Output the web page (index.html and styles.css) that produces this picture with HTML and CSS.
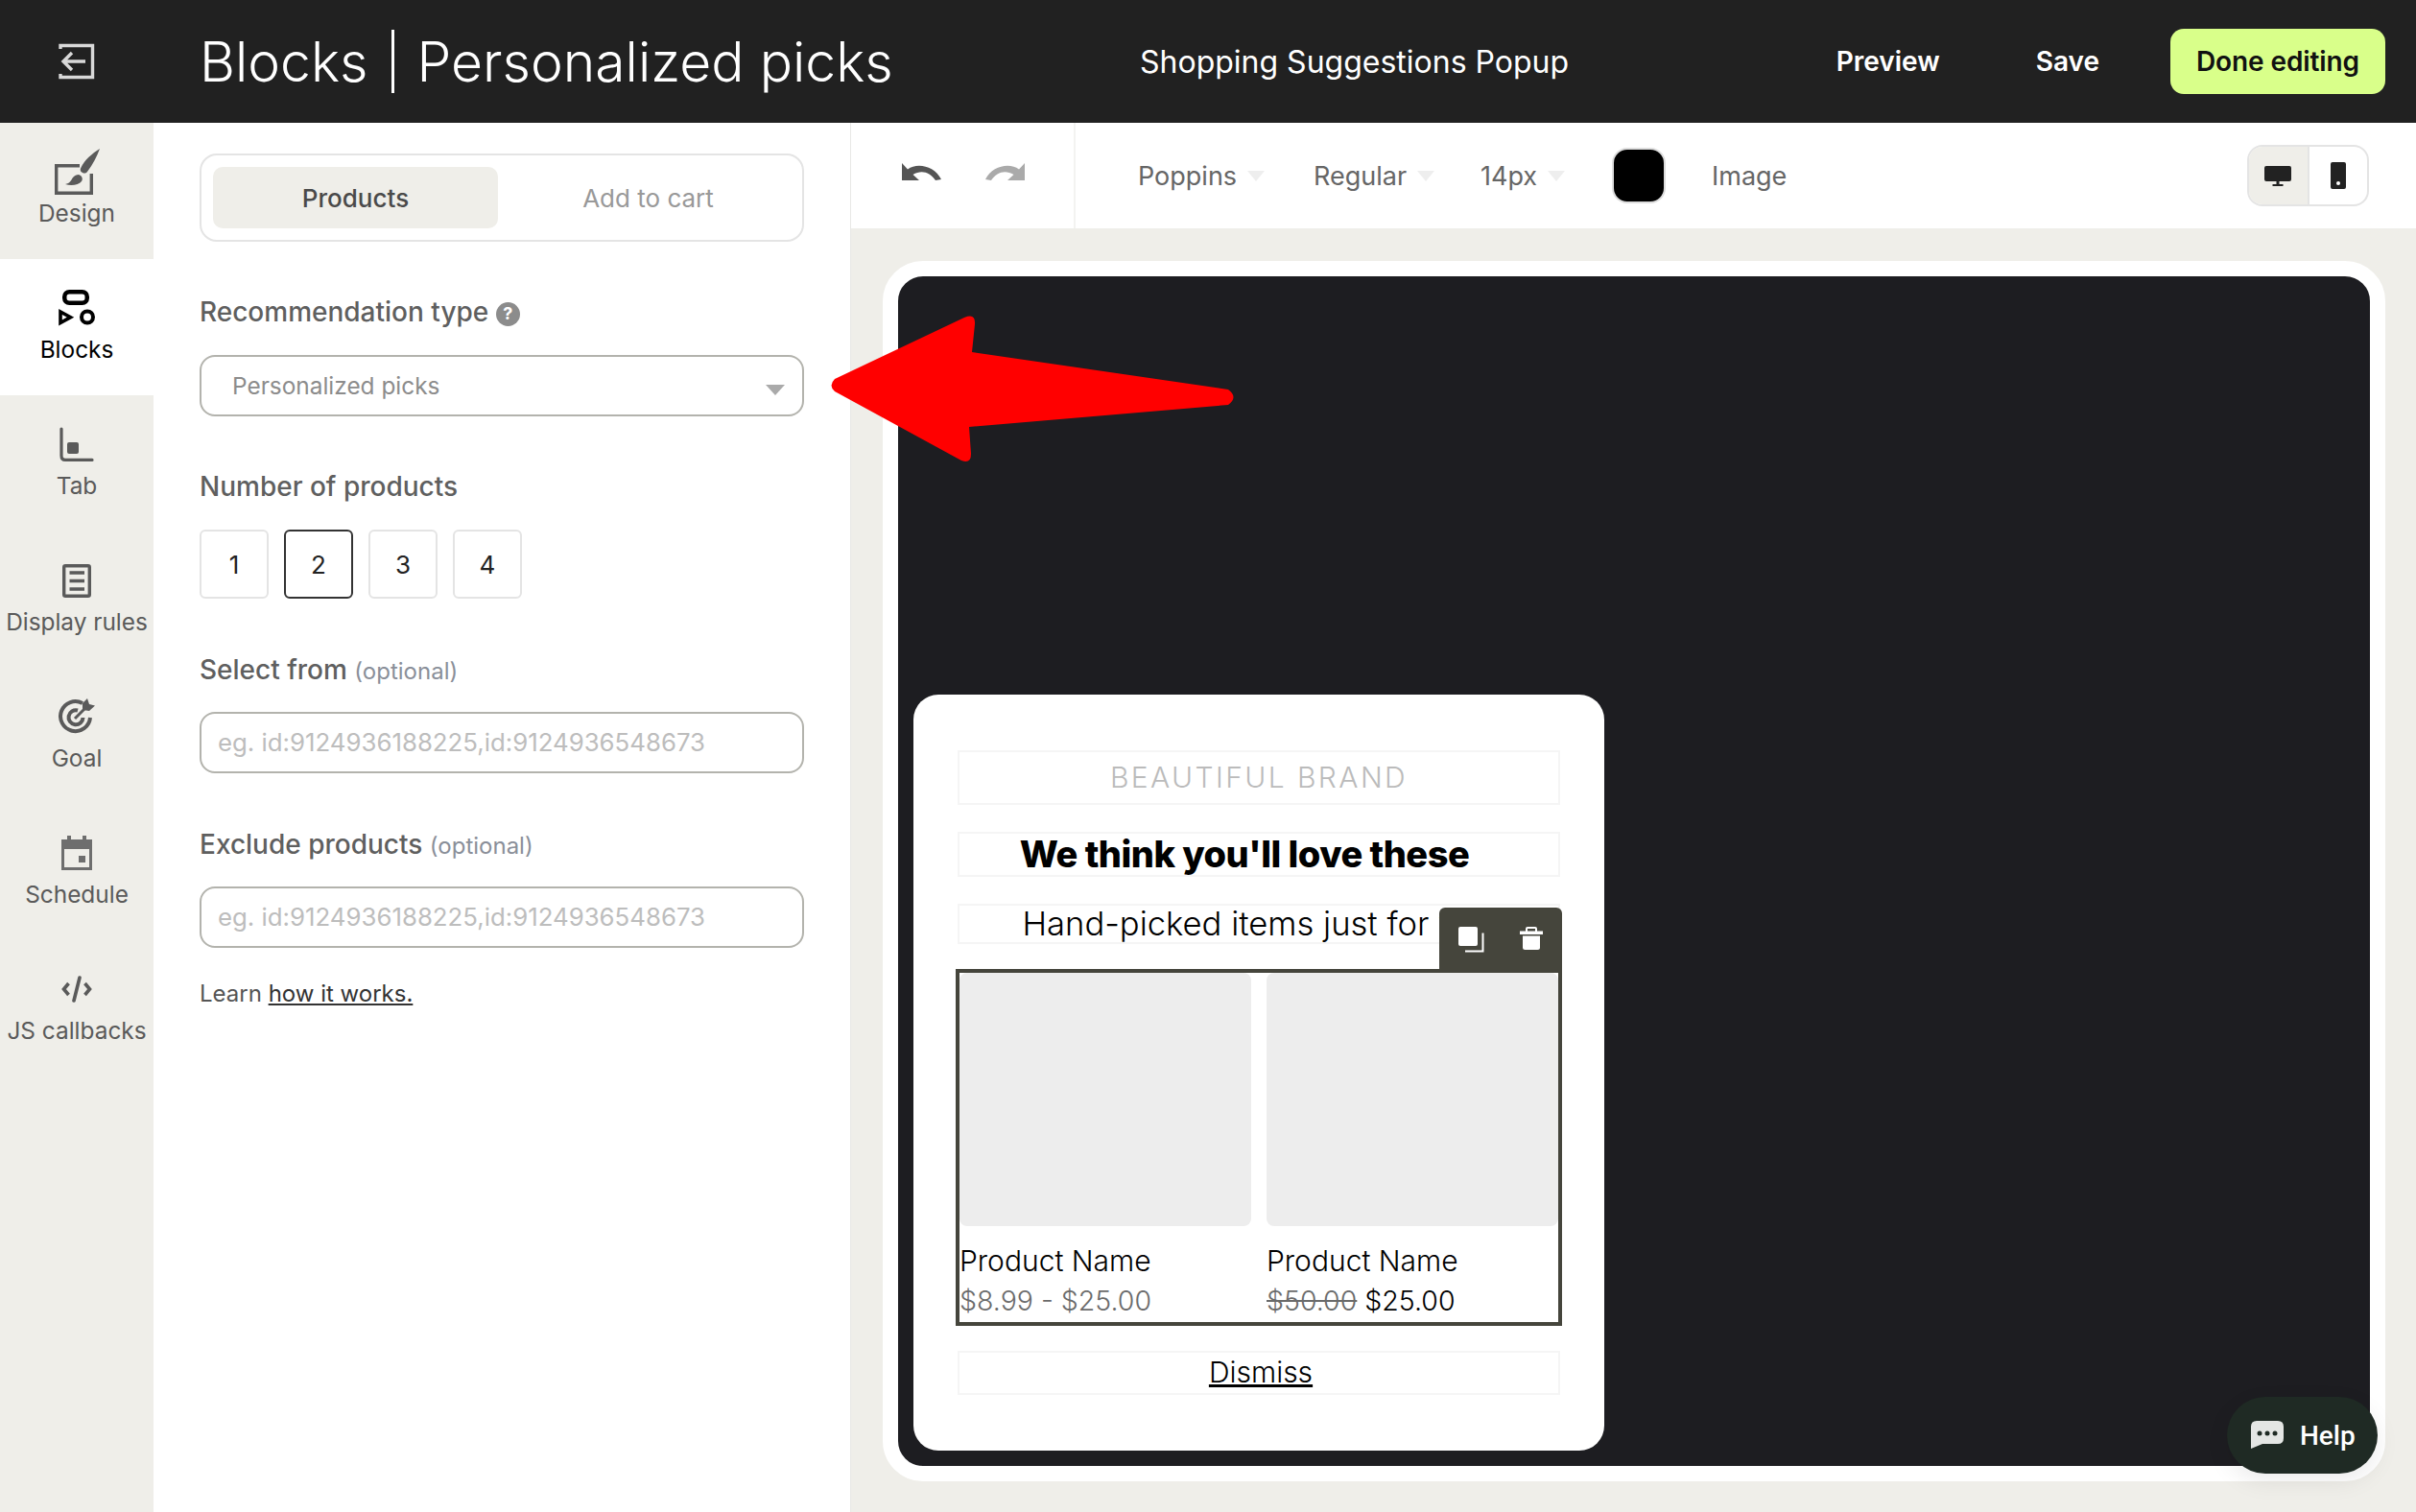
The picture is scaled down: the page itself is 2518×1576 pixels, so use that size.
FILE: index.html
```html
<!DOCTYPE html>
<html lang="en">
<head>
  <meta charset="UTF-8" />
  <title>Personalized picks</title>
  <link rel="stylesheet" href="styles.css">
</head>
<body>
  <header class="topbar">
    <div class="back-btn">
      <svg width="38" height="38" viewBox="0 0 38 38" fill="none" stroke="#d8d8d8" stroke-width="3.4">
        <path d="M2 6V2.500H35.500V35.500H2V32" />
        <path d="M28 19H6M14 10L5 19L14 28" />
      </svg>
    </div>
    <h1 class="page-title">Blocks <span class="title-sep"></span> Personalized picks</h1>
    <div class="campaign-name">Shopping Suggestions Popup</div>
    <nav class="top-actions">
      <a class="top-link preview-link">Preview</a>
      <a class="top-link save-link">Save</a>
      <button class="done-btn">Done editing</button>
    </nav>
  </header>

  <div class="workspace">
    <aside class="sidebar">
      <div class="side-item">
        <div class="side-icon">
          <svg width="47" height="48" viewBox="0 0 47 48" fill="#5a5a5a">
            <path d="M26 17.700H1.700V46.300H38.300V26" fill="none" stroke="#5a5a5a" stroke-width="3.400" />
            <path d="M47 0C44 8 40 16 34 24C32 26.500 29 25.500 27.500 24C26.500 22.500 26.500 21 27.500 19.500C31 12 39 5 47 0Z" />
            <path d="M25 27C28 28 30 31 28 34C25 38 17 39 11 37C16 36 17 33 19 30C20.500 28 23 27 25 27Z" />
          </svg>
        </div>
        <span>Design</span>
      </div>
      <div class="side-item is-active">
        <div class="side-icon">
          <svg width="38" height="38" viewBox="0 0 38 38" fill="none" stroke="#000" stroke-width="4.500">
            <rect x="6.250" y="2.250" width="23.500" height="11.500" rx="5" />
            <path d="M2 23V34.500L12.500 28.700Z" stroke-width="3.600" />
            <circle cx="30" cy="28.500" r="6" stroke-width="4" />
          </svg>
        </div>
        <span>Blocks</span>
      </div>
      <div class="side-item">
        <div class="side-icon">
          <svg width="36" height="36" viewBox="0 0 36 36" fill="none" stroke="#5a5a5a" stroke-width="3.200" stroke-linecap="round">
            <path d="M2 2V30Q2 34.400 6 34.400H34" />
            <rect x="8" y="16" width="12" height="12" rx="2" fill="#5a5a5a" stroke="none" />
          </svg>
        </div>
        <span>Tab</span>
      </div>
      <div class="side-item">
        <div class="side-icon">
          <svg width="30" height="35" viewBox="0 0 30 35" fill="none" stroke="#5a5a5a" stroke-width="3.400">
            <rect x="1.700" y="1.700" width="26.600" height="31.600" rx="1.500" />
            <path d="M7.500 9H23M7.500 17.500H23M7.500 26H23" />
          </svg>
        </div>
        <span>Display rules</span>
      </div>
      <div class="side-item">
        <div class="side-icon">
          <svg width="38" height="38" viewBox="0 0 38 38" fill="none" stroke="#5a5a5a" stroke-width="4">
            <path d="M25 5A15.500 15.500 0 1 0 33 20" />
            <path d="M20 12.500A7.500 7.500 0 1 0 25.500 20" />
            <path d="M17 21L27 11" stroke-width="3" />
            <path d="M25 5L30 0L32 6L38 7.500L32 13L25 12Z" fill="#5a5a5a" stroke="none" />
          </svg>
        </div>
        <span>Goal</span>
      </div>
      <div class="side-item">
        <div class="side-icon">
          <svg width="32" height="36" viewBox="0 0 32 36" fill="#6e6e6e">
            <path d="M0 4H6V0H10V4H22V0H26V4H32V36H0ZM3 14V33H29V14Z" />
            <rect x="18" y="21" width="7" height="7" />
          </svg>
        </div>
        <span>Schedule</span>
      </div>
      <div class="side-item">
        <div class="side-icon">
          <svg width="32" height="28" viewBox="0 0 32 28" fill="none" stroke="#5a5a5a" stroke-width="3.600">
            <path d="M7.500 8L2.500 14L7.500 20M24.500 8L29.500 14L24.500 20" />
            <path d="M19 2L13 26" stroke-linecap="round" />
          </svg>
        </div>
        <span>JS callbacks</span>
      </div>
    </aside>

    <section class="settings">
      <div class="tabs">
        <div class="tab is-on">Products</div>
        <div class="tab">Add to cart</div>
      </div>

      <div class="field field-type">
        <label>Recommendation type <span class="help-dot">?</span></label>
        <div class="select-box">Personalized picks<i class="caret"></i></div>
      </div>

      <div class="field field-count">
        <label>Number of products</label>
        <div class="count-row">
          <div class="count-btn">1</div>
          <div class="count-btn is-on">2</div>
          <div class="count-btn">3</div>
          <div class="count-btn">4</div>
        </div>
      </div>

      <div class="field field-select">
        <label>Select from <small>(optional)</small></label>
        <div class="text-box">eg. id:9124936188225,id:9124936548673</div>
      </div>

      <div class="field field-exclude">
        <label>Exclude products <small>(optional)</small></label>
        <div class="text-box">eg. id:9124936188225,id:9124936548673</div>
      </div>

      <p class="learn">Learn <a>how it works.</a></p>
    </section>

    <main class="editor">
      <div class="toolbar">
        <div class="history">
          <svg width="41" height="18" viewBox="0 0 41 18" fill="#555">
            <path d="M0 0V18H18L11.500 12C20 7 29 9 35 18L41 17C34 3 16 -1 6 6.500Z" />
          </svg>
          <svg width="41" height="18" viewBox="0 0 41 18" fill="#aaa">
            <path d="M41 0V18H23L29.500 12C21 7 12 9 6 18L0 17C7 3 25 -1 35 6.500Z" />
          </svg>
        </div>
        <div class="format">
          <span class="fmt fmt-font">Poppins<i></i></span>
          <span class="fmt fmt-weight">Regular<i></i></span>
          <span class="fmt fmt-size">14px<i></i></span>
          <span class="swatch"></span>
          <span class="fmt fmt-image">Image</span>
        </div>
        <div class="device">
          <div class="device-btn is-on">
            <svg width="28" height="21" viewBox="0 0 28 21" fill="#222">
              <rect width="28" height="16" rx="2" />
              <rect x="12.500" y="16" width="3" height="3" />
              <rect x="8.500" y="19" width="11" height="2" />
            </svg>
          </div>
          <div class="device-btn">
            <svg width="16" height="28" viewBox="0 0 16 28">
              <rect width="16" height="28" rx="2" fill="#222" />
              <circle cx="8" cy="22" r="2" fill="#fff" />
            </svg>
          </div>
        </div>
      </div>

      <div class="stage">
        <div class="frame">
          <div class="popup">
            <div class="block brand">BEAUTIFUL BRAND</div>
            <div class="block headline">We think you'll love these</div>
            <div class="block subline">Hand-picked items just for you</div>
            <div class="products">
              <div class="block-tools">
                <svg width="27" height="27" viewBox="0 0 27 27" fill="none">
                  <rect width="20" height="20" rx="2" fill="#fff" />
                  <path d="M25.500 6.500V25.500H7" stroke="#fff" stroke-width="2" />
                </svg>
                <svg width="24" height="24" viewBox="0 0 24 24" fill="#fff">
                  <path d="M0 4.500H6V2Q6 0 8 0H16Q18 0 18 2V4.500H24V8H0ZM8 4.500H16V2H8Z" fill-rule="evenodd" />
                  <path d="M3 9.500H21V21.500Q21 24 18.500 24H5.500Q3 24 3 21.500Z" />
                </svg>
              </div>
              <div class="product">
                <div class="thumb"></div>
                <div class="p-name">Product Name</div>
                <div class="p-price"><span class="muted">$8.99 - $25.00</span></div>
              </div>
              <div class="product">
                <div class="thumb"></div>
                <div class="p-name">Product Name</div>
                <div class="p-price"><s class="muted">$50.00</s> $25.00</div>
              </div>
            </div>
            <div class="block dismiss"><u>Dismiss</u></div>
          </div>
        </div>
      </div>
    </main>
  </div>

  <svg class="arrow" width="440" height="170" viewBox="0 0 440 170">
    <path d="M10 75L145 11Q157 6 156 18L153 47L420 86Q431 94 420 102L150 125L152 153Q152 164 142 160L10 88Q3 82 10 75Z" fill="#ff0000" />
  </svg>

  <button class="help-btn">
    <svg width="36" height="30" viewBox="0 0 36 30">
      <path d="M7 0H29Q35 0 35 6V18Q35 24 29 24H13L1 29V6Q1 0 7 0Z" fill="#e4e6e4" />
      <circle cx="10" cy="13" r="2.500" fill="#1f2a24" />
      <circle cx="18" cy="13" r="2.500" fill="#1f2a24" />
      <circle cx="26" cy="13" r="2.500" fill="#1f2a24" />
    </svg>
    Help
  </button>
</body>
</html>
```

FILE: styles.css
```css
html, body {
  margin: 0;
  padding: 0;
  height: 100%;
  overflow: hidden;
  background: #efeee9;
  font-family: 'Inter', sans-serif;
  color: #555;
}

body {
  display: flex;
  flex-direction: column;
  position: relative;
}

/* top bar */
.topbar {
  height: 128px;
  flex: none;
  background: #212121;
  color: #fff;
  display: flex;
  align-items: center;
}

.back-btn {
  width: 160px;
  display: flex;
  justify-content: center;
}

.page-title {
  margin: 0 0 0 48px;
  width: 980px;
  font-size: 57px;
  font-weight: 300;
  white-space: nowrap;
  display: flex;
  align-items: center;
  gap: 24px;
}

.title-sep {
  width: 3px;
  height: 66px;
  background: #fff;
}

.campaign-name {
  font-size: 32px;
  font-weight: 400;
  white-space: nowrap;
}

.top-actions {
  margin-left: auto;
  display: flex;
  align-items: center;
  padding-right: 32px;
}

.top-link {
  font-size: 28px;
  font-weight: 600;
}

.preview-link {
  margin-right: 100px;
}

.save-link {
  margin-right: 74px;
}

.done-btn {
  width: 224px;
  height: 68px;
  border: none;
  border-radius: 14px;
  background: #d9ff8a;
  color: #111;
  font-family: inherit;
  font-size: 28px;
  font-weight: 600;
  letter-spacing: -0.1px;
  padding: 0;
}

.workspace {
  flex: 1;
  display: flex;
  min-height: 0;
}

/* left rail */
.sidebar {
  width: 160px;
  flex: none;
  background: #efeee9;
  display: flex;
  flex-direction: column;
}

.side-item {
  height: 142px;
  flex: none;
  display: flex;
  flex-direction: column;
  align-items: center;
  font-size: 24.4px;
  color: #5a5a5a;
  white-space: nowrap;
}

.side-icon {
  height: 48px;
  margin-top: 27px;
  margin-bottom: 4px;
  display: flex;
  align-items: center;
  justify-content: center;
}

.side-item.is-active {
  background: #fff;
  color: #000;
}

/* settings panel */
.settings {
  width: 727px;
  flex: none;
  box-sizing: border-box;
  background: #fff;
  border-right: 1px solid #e8e8e6;
  padding: 32px 48px;
}

.tabs {
  width: 630px;
  height: 92px;
  box-sizing: border-box;
  border: 2px solid #e4e4e4;
  border-radius: 18px;
  padding: 12px;
  display: flex;
}

.tab {
  flex: 1;
  display: flex;
  align-items: center;
  justify-content: center;
  border-radius: 10px;
  font-size: 26px;
  color: #999;
}

.tab.is-on {
  flex: none;
  width: 297px;
  background: #efeee9;
  color: #4a4a4a;
  font-weight: 500;
  margin-right: 8px;
}

.field label {
  display: block;
  font-size: 28px;
  font-weight: 500;
  line-height: 40px;
  color: #5f5f5f;
  white-space: nowrap;
}

.field small {
  font-size: 24px;
  font-weight: 400;
  color: #8a8f99;
}

.help-dot {
  display: inline-flex;
  width: 25px;
  height: 25px;
  align-items: center;
  justify-content: center;
  border-radius: 50%;
  background: #8c8c8c;
  color: #fff;
  font-size: 18px;
  font-weight: 700;
  vertical-align: 2px;
}

.field-type {
  margin-top: 53px;
}

.field-count {
  margin-top: 53px;
}

.field-select {
  margin-top: 54px;
}

.field-exclude {
  margin-top: 54px;
}

.select-box, .text-box {
  width: 630px;
  height: 64px;
  box-sizing: border-box;
  border: 2px solid #b3b3ad;
  border-radius: 16px;
  display: flex;
  align-items: center;
  white-space: nowrap;
}

.select-box {
  margin-top: 25px;
  padding-left: 32px;
  font-size: 24.4px;
  color: #8c8c8c;
  position: relative;
}

.caret {
  position: absolute;
  right: 18px;
  top: 29px;
  border-left: 10px solid transparent;
  border-right: 10px solid transparent;
  border-top: 11px solid #aaa;
}

.text-box {
  margin-top: 22px;
  padding-left: 17px;
  padding-bottom: 1px;
  font-size: 25.8px;
  color: #bdbdbd;
}

.count-row {
  display: flex;
  gap: 16px;
  margin-top: 25px;
}

.count-btn {
  width: 72px;
  height: 72px;
  box-sizing: border-box;
  border: 2px solid #e4e4e4;
  border-radius: 6px;
  display: flex;
  align-items: center;
  justify-content: center;
  font-size: 26px;
  color: #222;
}

.count-btn.is-on {
  border-color: #333;
}

.learn {
  margin: 32px 0 0;
  font-size: 24px;
  line-height: 32px;
  color: #555;
}

.learn a {
  color: #333;
  text-decoration: underline;
}

/* editor area */
.editor {
  flex: 1;
  min-width: 0;
  display: flex;
  flex-direction: column;
}

.toolbar {
  height: 110px;
  flex: none;
  background: #fff;
  display: flex;
  align-items: center;
}

.history {
  width: 234px;
  height: 100%;
  box-sizing: border-box;
  border-right: 2px solid #f3f3f1;
  display: flex;
  gap: 46px;
  padding: 42px 0 0 53px;
}

.format {
  display: flex;
  align-items: center;
  margin-left: 65px;
  font-size: 27px;
  color: #666;
}

.fmt {
  display: flex;
  align-items: center;
  white-space: nowrap;
}

.fmt i {
  margin-left: 11px;
  border-left: 9px solid transparent;
  border-right: 9px solid transparent;
  border-top: 11px solid #eee;
}

.fmt-font {
  width: 183px;
}

.fmt-weight {
  width: 174px;
}

.fmt-size {
  width: 137px;
}

.swatch {
  width: 56px;
  height: 58px;
  box-sizing: border-box;
  background: #000;
  border: 2px solid #ddd;
  border-radius: 16px;
  margin-right: 48px;
}

.device {
  margin-left: auto;
  margin-right: 49px;
  width: 127px;
  height: 64px;
  box-sizing: border-box;
  border: 2px solid #e4e4e4;
  border-radius: 16px;
  overflow: hidden;
  display: flex;
}

.device-btn {
  flex: 1;
  display: flex;
  align-items: center;
  justify-content: center;
}

.device-btn.is-on {
  background: #efeee9;
  border-right: 2px solid #e4e4e4;
}

.stage {
  flex: 1;
  padding: 34px 32px 0 33px;
  min-height: 0;
}

.frame {
  width: 1566px;
  height: 1272px;
  box-sizing: border-box;
  background: #1d1d21;
  border: 16px solid #fff;
  border-radius: 42px;
  display: flex;
  align-items: flex-end;
  padding: 0 0 16px 16px;
}

/* popup preview */
.popup {
  width: 720px;
  height: 788px;
  box-sizing: border-box;
  background: #fff;
  border-radius: 26px;
  padding: 58px 46px 0;
  color: #000;
}

.block {
  border: 2px solid #f5f5f5;
  text-align: center;
  white-space: nowrap;
  overflow: hidden;
  box-sizing: border-box;
}

.brand {
  height: 57px;
  line-height: 53px;
  font-size: 30px;
  font-weight: 300;
  letter-spacing: 2.4px;
  color: #bbb;
}

.headline {
  height: 47px;
  line-height: 43px;
  margin-top: 28px;
  padding-right: 30px;
  font-size: 38px;
  font-weight: 800;
  letter-spacing: -0.5px;
}

.subline {
  height: 42px;
  line-height: 36px;
  margin-top: 28px;
  font-size: 34.6px;
  font-weight: 300;
}

.products {
  position: relative;
  height: 372px;
  width: 632px;
  margin: 26px 0 0 -2px;
  box-sizing: border-box;
  border: 4px solid #45453c;
  display: flex;
  gap: 16px;
  background: #fff;
}

.block-tools {
  position: absolute;
  right: -4px;
  top: -68px;
  width: 128px;
  height: 64px;
  background: #45453c;
  border-radius: 6px 6px 0 0;
  display: flex;
  align-items: flex-start;
  justify-content: space-between;
  box-sizing: border-box;
  padding: 20px 20px 0;
}

.product {
  width: 304px;
}

.thumb {
  height: 264px;
  background: #ededed;
  border-radius: 8px;
}

.p-name {
  margin-top: 18px;
  font-size: 30px;
  line-height: 36px;
  font-weight: 300;
}

.p-price {
  margin-top: 6px;
  font-size: 28.5px;
  line-height: 36px;
  font-weight: 300;
}

.muted {
  color: #6b6b6b;
}

.dismiss {
  width: 628px;
  height: 46px;
  line-height: 40px;
  margin-top: 26px;
  padding-left: 4px;
  font-size: 30px;
  font-weight: 300;
}

/* overlays */
.arrow {
  position: absolute;
  left: 860px;
  top: 320px;
}

.help-btn {
  position: absolute;
  left: 2321px;
  top: 1456px;
  width: 157px;
  height: 80px;
  border: none;
  border-radius: 40px;
  background: #1f2a24;
  color: #fff;
  font-family: 'Roboto', sans-serif;
  font-size: 28px;
  font-weight: 500;
  display: flex;
  align-items: center;
  gap: 16px;
  padding: 0 0 0 24px;
  box-sizing: border-box;
  box-shadow: 0 8px 24px rgba(0, 0, 0, 0.08);
}
```
